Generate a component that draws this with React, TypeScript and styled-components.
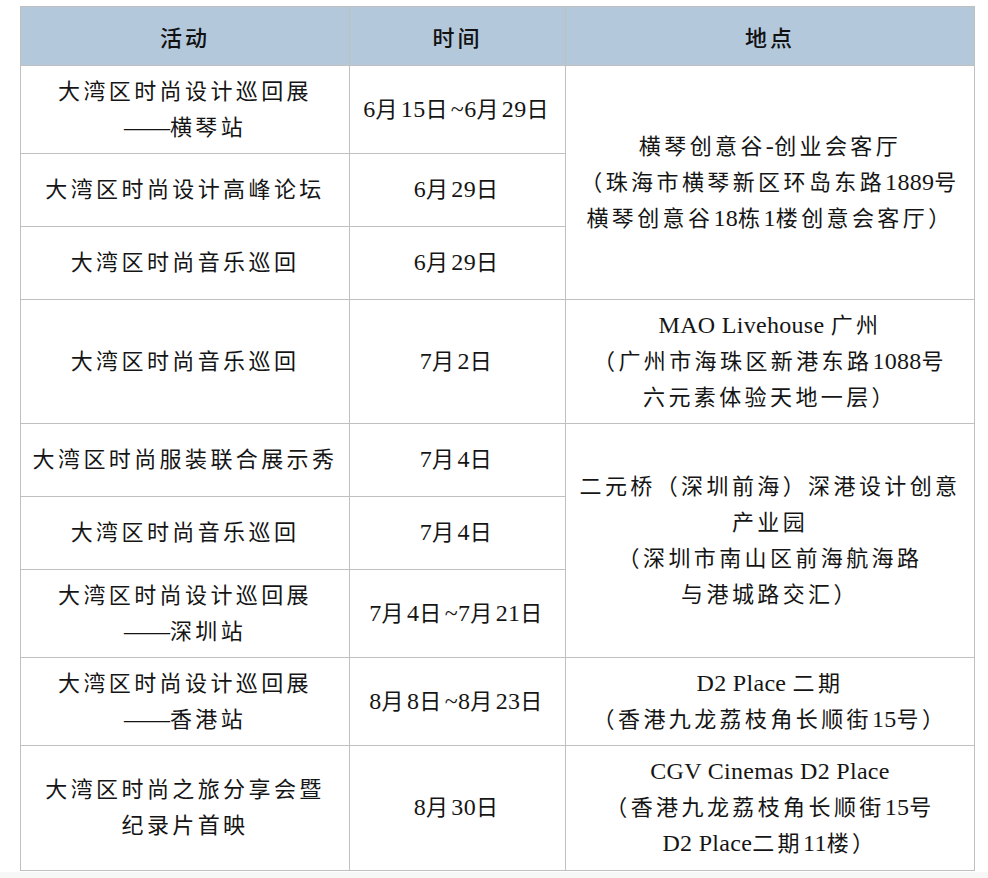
import React from "react";
import styled, { createGlobalStyle } from "styled-components";

const Global = createGlobalStyle`
  html, body {
    margin: 0;
    padding: 0;
    background: #f7f7f7;
  }
  body {
    font-family: "Liberation Serif", "Noto Sans CJK SC", serif;
    color: #151515;
  }
`;

const Page = styled.div`
  background: #ffffff;
  padding: 6px 15px 1px 20px;
`;

const Table = styled.table`
  width: 954px;
  border-collapse: collapse;
  table-layout: fixed;
  font-size: 22px;
  line-height: 36px;
`;

const Col = styled.col<{ $w: number }>`
  width: ${(p) => p.$w}px;
`;

const Row = styled.tr<{ $h: number }>`
  height: ${(p) => p.$h}px;
`;

const HeadCell = styled.th`
  background: #b4c8dc;
  border: 1px solid #c0c0c0;
  font-family: "Noto Sans CJK SC", sans-serif;
  font-weight: 500;
  font-size: 22px;
  letter-spacing: 3px;
  text-align: center;
  vertical-align: middle;
  padding: 0 4px;
  color: #111;
`;

const Cell = styled.td`
  border: 1px solid #c0c0c0;
  text-align: center;
  vertical-align: middle;
  padding: 0 4px;
  white-space: nowrap;
`;

const Line = styled.div`
  display: block;
  height: 36px;
  line-height: 36px;
`;

const Cjk = styled.span`
  font-family: "Noto Sans CJK SC", sans-serif;
  font-size: 22px;
  line-height: 1;
  letter-spacing: 3.4px;
`;

const Latin = styled.span`
  font-family: "Liberation Serif", serif;
  font-size: 24px;
  line-height: 1;
  letter-spacing: 0.3px;
`;

const Dash = styled.span`
  font-family: "Liberation Serif", serif;
  font-size: 23px;
  line-height: 1;
  letter-spacing: 0;
`;

const LATIN = /^[\x20-\x7e]+$/;
const DASH = /^\u2014+$/;

function renderLine(text: string) {
  const parts = text.match(/[\x20-\x7e]+|\u2014+|[^\x20-\x7e\u2014]+/g) || [];
  return parts.map((part, i) => {
    if (LATIN.test(part)) return <Latin key={i}>{part}</Latin>;
    if (DASH.test(part)) return <Dash key={i}>{part}</Dash>;
    return <Cjk key={i}>{part}</Cjk>;
  });
}

function Lines({ text }: { text: string }) {
  return (
    <>
      {text.split("\n").map((l, i) => (
        <Line key={i}>{renderLine(l)}</Line>
      ))}
    </>
  );
}

type Item = {
  h: number;
  event: string;
  time: string;
  place?: string;
  span?: number;
};

const rows: Item[] = [
  {
    h: 88,
    event: "大湾区时尚设计巡回展\n——横琴站",
    time: "6月15日~6月29日",
    place:
      "横琴创意谷-创业会客厅\n（珠海市横琴新区环岛东路1889号\n横琴创意谷18栋1楼创意会客厅）",
    span: 3,
  },
  { h: 73, event: "大湾区时尚设计高峰论坛", time: "6月29日" },
  { h: 73, event: "大湾区时尚音乐巡回", time: "6月29日" },
  {
    h: 124,
    event: "大湾区时尚音乐巡回",
    time: "7月2日",
    place: "MAO Livehouse 广州\n（广州市海珠区新港东路1088号\n六元素体验天地一层）",
    span: 1,
  },
  {
    h: 73,
    event: "大湾区时尚服装联合展示秀",
    time: "7月4日",
    place: "二元桥（深圳前海）深港设计创意\n产业园\n（深圳市南山区前海航海路\n与港城路交汇）",
    span: 3,
  },
  { h: 73, event: "大湾区时尚音乐巡回", time: "7月4日" },
  { h: 88, event: "大湾区时尚设计巡回展\n——深圳站", time: "7月4日~7月21日" },
  {
    h: 88,
    event: "大湾区时尚设计巡回展\n——香港站",
    time: "8月8日~8月23日",
    place: "D2 Place 二期\n（香港九龙荔枝角长顺街15号）",
    span: 1,
  },
  {
    h: 125,
    event: "大湾区时尚之旅分享会暨\n纪录片首映",
    time: "8月30日",
    place: "CGV Cinemas D2 Place\n（香港九龙荔枝角长顺街15号\nD2 Place二期11楼）",
    span: 1,
  },
];

export default function App() {
  return (
    <>
      <Global />
      <Page>
        <Table>
          <colgroup>
            <Col $w={329} />
            <Col $w={216} />
            <Col $w={409} />
          </colgroup>
          <thead>
            <Row $h={59}>
              <HeadCell>活动</HeadCell>
              <HeadCell>时间</HeadCell>
              <HeadCell>地点</HeadCell>
            </Row>
          </thead>
          <tbody>
            {rows.map((r, i) => (
              <Row $h={r.h} key={i}>
                <Cell>
                  <Lines text={r.event} />
                </Cell>
                <Cell>
                  <Lines text={r.time} />
                </Cell>
                {r.place !== undefined && (
                  <Cell rowSpan={r.span}>
                    <Lines text={r.place} />
                  </Cell>
                )}
              </Row>
            ))}
          </tbody>
        </Table>
      </Page>
    </>
  );
}
